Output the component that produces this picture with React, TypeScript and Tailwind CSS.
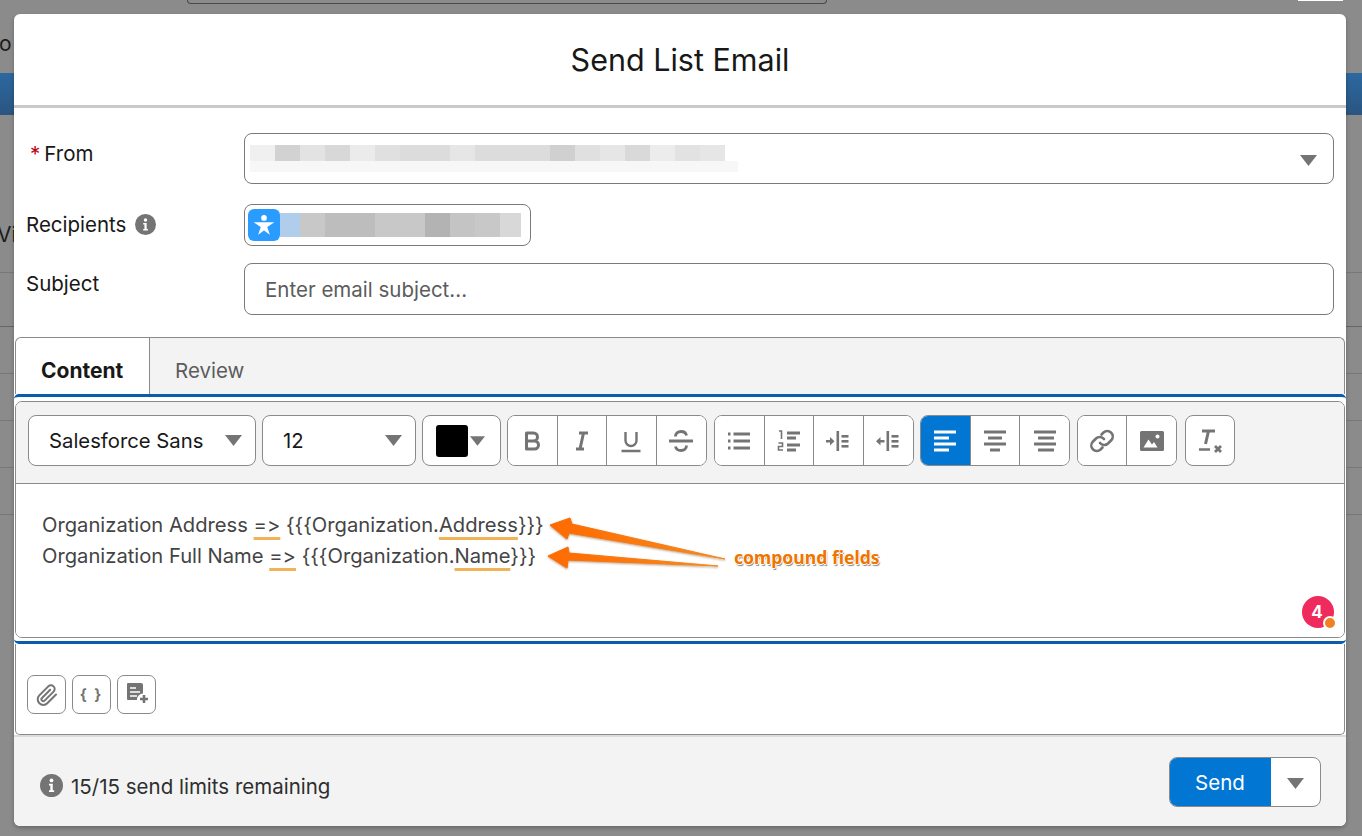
import type { ReactNode } from "react";

const fromRowOne = ["#f0f0f0", "#d2d2d2", "#e3e3e3", "#d8d8d8", "#ebebeb", "#e0e0e0", "#dcdcdc", "#dcdcdc", "#e6e6e6", "#dcdcdc", "#dcdcdc", "#dcdcdc", "#d0d0d0", "#e0e0e0", "#e6e6e6", "#d9d9d9", "#ececec", "#e2e2e2", "#e6e6e6"];
const recipientBlocks = [
  { w: 20, c: "#b0cdec" },
  { w: 25, c: "#c8c8c8" },
  { w: 50, c: "#bdbdbd" },
  { w: 50, c: "#c8c8c8" },
  { w: 25, c: "#b3b3b3" },
  { w: 25, c: "#c4c4c4" },
  { w: 25, c: "#c8c8c8" },
  { w: 21, c: "#d8d8d8" },
];
const markClass = "underline decoration-[#f0b357] decoration-[2.5px] underline-offset-[5px] [text-decoration-skip-ink:none]";

function Caret({ className = "" }: { className?: string }) {
  return (
    <svg width="17" height="11" viewBox="0 0 17 11" className={className}>
      <polygon points="0,0 17,0 8.5,11" fill="#747474" />
    </svg>
  );
}

function Glyph({ children, color = "#747474", width = 2.6 }: { children: ReactNode; color?: string; width?: number }) {
  return (
    <svg width="26" height="26" viewBox="0 0 26 26" fill="none" stroke={color} strokeWidth={width} strokeLinecap="round" strokeLinejoin="round">
      {children}
    </svg>
  );
}

function AlignBars({ rows, color = "#747474" }: { rows: number[][]; color?: string }) {
  return (
    <Glyph color={color} width={2.9}>
      {rows.map(([x1, x2], i) => (
        <path key={i} d={`M${x1} ${4 + i * 6}H${x2}`} strokeLinecap="butt" />
      ))}
    </Glyph>
  );
}

function IndentIcon({ flip }: { flip?: boolean }) {
  return (
    <svg width="26" height="26" viewBox="0 0 26 26">
      <rect x="11.5" y="3" width="2.6" height="20" fill="#747474" />
      {[7, 12, 17].map((y) => (
        <rect key={y} x="16.5" y={y} width="7" height="2.6" fill="#747474" />
      ))}
      {flip ? (
        <path d="M9.500 12h-4v-3l-4.500 4.300 4.500 4.300v-3h4z" fill="#747474" />
      ) : (
        <path d="M1 12h4v-3l4.500 4.300-4.500 4.300v-3h-4z" fill="#747474" />
      )}
    </svg>
  );
}

function ToolButton({ children, active, last, narrow }: { children: ReactNode; active?: boolean; last?: boolean; narrow?: boolean }) {
  return (
    <div className={`flex ${narrow ? "w-[49px]" : "w-[49.5px]"} items-center justify-center ${last ? "" : "border-r border-[#8a8a8a]"} ${active ? "bg-[#0176d3]" : "bg-white"}`}>
      {children}
    </div>
  );
}

function ToolGroup({ children }: { children: ReactNode }) {
  return <div className="flex h-[51px] overflow-hidden rounded-[8px] border border-[#8a8a8a] bg-white">{children}</div>;
}

function InfoDot({ size }: { size: number }) {
  return (
    <svg width={size} height={size} viewBox="0 0 22 22">
      <circle cx="11" cy="11" r="11" fill="#747474" />
      <circle cx="11" cy="6.2" r="1.8" fill="#fff" />
      <path d="M8.6 9.4h3.6v6.2h1.3v1.6H8.6v-1.6h1.3v-4.6H8.6z" fill="#fff" />
    </svg>
  );
}

function SmallAction({ children }: { children: ReactNode }) {
  return <div className="flex h-[39px] w-[39px] items-center justify-center rounded-[7px] border border-[#8a8a8a] bg-white">{children}</div>;
}

function Backdrop() {
  return (
    <div className="flex h-full flex-col bg-[#8b8b8b] text-[21px] text-[#1c1c1c]">
      <div className="flex h-[73px] flex-col">
        <div className="flex">
          <div className="ml-[187px] h-[4px] w-[640px] rounded-b-[4px] border-x border-b border-[#4a4a4a]" />
          <div className="ml-[471px] h-[1px] w-[45px] bg-white" />
        </div>
        <div className="mt-[26px] -ml-[1px] leading-[28px]">o</div>
      </div>
      <div className="h-[42px] bg-linear-to-b from-[#2c68a0] to-[#2a5580]" />
      <div className="h-[158px] border-b border-[#777]">
        <div className="mt-[106px] -ml-[3px] leading-[28px]">Vi</div>
      </div>
      <div className="h-[54px] border-b border-[#666]" />
      <div className="h-[47px] border-b border-[#777]" />
      <div className="h-[47px] border-b border-[#777]" />
      <div className="h-[47px] border-b border-[#777]" />
      <div className="h-[47px] border-b border-[#777]" />
    </div>
  );
}

export default function App() {
  return (
    <div className="relative h-[836px] w-[1362px] overflow-hidden [font-family:Inter,'Liberation_Sans',sans-serif] [font-feature-settings:'calt'_0]">
      <Backdrop />

      <div className="absolute left-[14px] top-[14px] flex h-[812px] w-[1332px] flex-col rounded-[6px] bg-white shadow-[0_2px_4px_rgba(0,0,0,0.25)]">
        <header className="flex h-[94px] items-center justify-center border-b-[3px] border-[#c9c9c9] text-[30.5px] font-normal text-[#181818]">
          Send List Email
        </header>

        <div className="flex flex-col gap-y-[20px] pl-[12px] pr-[12px] pt-[25px] text-[20.5px] text-[#181818]">
          <div className="flex h-[51px]">
            <div className="flex w-[218px] pl-[4px] pt-[7px] leading-[28px]">
              <span className="mr-[4px] text-[#ba0517]">*</span>From
            </div>
            <div className="relative flex flex-1 items-center rounded-[8px] border border-[#7a7a7a] bg-white">
              <div className="absolute left-[5px] top-[11px] flex h-[16px]">
                {fromRowOne.map((c, i) => (
                  <div key={i} className="h-full w-[25px]" style={{ backgroundColor: c }} />
                ))}
              </div>
              <div className="absolute left-[5px] top-[27px] h-[11px] w-[488px] bg-[#f7f7f7]" />
              <Caret className="absolute right-[16px] top-[21px]" />
            </div>
          </div>

          <div className="flex h-[42px]">
            <div className="flex w-[218px] items-start gap-[9px] pt-[7px] leading-[28px]">
              Recipients
              <span className="mt-[3px]">
                <InfoDot size={21} />
              </span>
            </div>
            <div className="flex w-[287px] items-center rounded-[8px] border border-[#7a7a7a] pl-[3px]">
              <div className="flex h-[32px] w-[32px] items-center justify-center rounded-[6px] bg-[#2a9bff]">
                <svg width="24" height="24" viewBox="0 0 22 22">
                  <circle cx="11" cy="4.5" r="2.6" fill="#fff" />
                  <path d="M1.5 8.5 L20.5 8.5 L14 12.8 L16.4 20 L11 16 L5.6 20 L8 12.8 Z" fill="#fff" />
                </svg>
              </div>
              <div className="flex h-[24px]">
                {recipientBlocks.map((b, i) => (
                  <div key={i} className="h-full" style={{ width: b.w, backgroundColor: b.c }} />
                ))}
              </div>
            </div>
          </div>

          <div className="-mt-[3px] flex h-[52px]">
            <div className="w-[218px] pt-[7px] leading-[28px]">Subject</div>
            <div className="flex flex-1 items-center rounded-[8px] border border-[#7a7a7a] pl-[20px] pt-[2px] text-[#5c5c5c]">Enter email subject...</div>
          </div>
        </div>

        <div className="mx-[1px] mt-[22px] flex h-[57px] rounded-t-[6px] border-x border-t border-[#8a8a8a] bg-[#f3f3f3] pt-[11px] text-[20.5px]">
          <div className="-mt-[11px] flex w-[134px] items-center rounded-tl-[6px] border-r border-[#8a8a8a] bg-white pl-[25px] pt-[9px] text-[21px] font-bold text-[#181818]">Content</div>
          <div className="flex items-center pl-[25px] text-[#5c5c5c]">Review</div>
        </div>

        <section className="h-[250px] rounded-[5px] border-y-[3px] border-[#0b5cab] bg-white">
          <div className="mx-[1px] mt-[4px] flex h-[237px] flex-col overflow-hidden rounded-[7px] border border-[#8a8a8a]">
            <div className="flex h-[82px] items-start gap-[6px] border-b border-[#8a8a8a] bg-[#f3f3f3] pl-[12px] pt-[13px]">
              <div className="flex h-[51px] w-[228px] items-center justify-between rounded-[8px] border border-[#8a8a8a] bg-white pl-[20px] pr-[13px] text-[20.3px] text-[#181818]">
                <span className="pt-[1px]">Salesforce Sans</span>
                <Caret />
              </div>
              <div className="flex h-[51px] w-[154px] items-center justify-between rounded-[8px] border border-[#8a8a8a] bg-white pl-[20px] pr-[13px] text-[20.3px] text-[#181818]">
                <span className="pt-[1px]">12</span>
                <Caret />
              </div>
              <div className="flex h-[51px] w-[79px] items-center rounded-[8px] border border-[#8a8a8a] bg-white pl-[13px]">
                <div className="h-[32px] w-[32px] rounded-[3px] bg-black" />
                <Caret className="ml-[2px] h-[10px] w-[15px]" />
              </div>

              <div className="flex gap-[7px]">
                <ToolGroup>
                  <ToolButton>
                    <Glyph width={3}>
                      <path d="M7.5 5h7a4 4 0 0 1 0 8h-7zM7.5 13h8a4 4 0 0 1 0 8h-8z" />
                    </Glyph>
                  </ToolButton>
                  <ToolButton>
                    <Glyph width={3}>
                      <path d="M10 5h9M7 21h8M14.5 5l-3.5 16" strokeLinecap="butt" />
                    </Glyph>
                  </ToolButton>
                  <ToolButton>
                    <Glyph width={2.4}>
                      <path d="M7.5 4v8.5a5.5 5.5 0 0 0 11 0V4" strokeLinecap="butt" />
                      <path d="M3.5 23h19" strokeLinecap="butt" />
                    </Glyph>
                  </ToolButton>
                  <ToolButton last>
                    <Glyph width={2.8}>
                      <path d="M18.5 7.5C18 5 16 3.5 13 3.5c-3.2 0-5.5 2-5.5 5M7.5 18.5c.5 2.5 2.5 4 5.5 4 3.2 0 5.5-2 5.5-5" strokeLinecap="butt" />
                      <path d="M1 13h24" strokeLinecap="butt" />
                    </Glyph>
                  </ToolButton>
                </ToolGroup>

                <ToolGroup>
                  <ToolButton>
                    <Glyph width={3}>
                      <path d="M7.5 6H24M7.5 13H24M7.5 20H24" strokeLinecap="butt" />
                      <path d="M2 6h2.5M2 13h2.5M2 20h2.5" strokeLinecap="butt" />
                    </Glyph>
                  </ToolButton>
                  <ToolButton>
                    <svg width="26" height="26" viewBox="0 0 26 26" fill="none" stroke="#747474">
                      <path d="M11 5h13M11 10h9M11 17h13M11 22h9" strokeWidth="2.9" />
                      <path d="M3 3h2.5v8M2.5 15h4v3.5h-4V22h4.500" strokeWidth="1.600" />
                    </svg>
                  </ToolButton>
                  <ToolButton>
                    <IndentIcon />
                  </ToolButton>
                  <ToolButton last>
                    <IndentIcon flip />
                  </ToolButton>
                </ToolGroup>

                <div className="-ml-[1px] flex h-[51px] overflow-hidden rounded-[8px] border border-[#8a8a8a] bg-white">
                  <ToolButton active>
                    <AlignBars color="#ffffff" rows={[[2, 24], [2, 17], [2, 24], [2, 17]]} />
                  </ToolButton>
                  <ToolButton>
                    <AlignBars rows={[[2, 24], [6, 20], [2, 24], [8, 18]]} />
                  </ToolButton>
                  <ToolButton narrow last>
                    <AlignBars rows={[[2, 24], [6, 22], [2, 24], [6, 22]]} />
                  </ToolButton>
                </div>

                <ToolGroup>
                  <ToolButton narrow>
                    <Glyph width={2.6}>
                      <path d="M11 15a5.5 5.5 0 0 0 8 .5l3.500-3.500a5.500 5.500 0 0 0-8-7.500l-2 2" />
                      <path d="M15 11a5.500 5.500 0 0 0-8-.5l-3.500 3.500a5.500 5.500 0 0 0 8 7.500l2-2" />
                    </Glyph>
                  </ToolButton>
                  <ToolButton narrow last>
                    <svg width="26" height="26" viewBox="0 0 26 26">
                      <rect x="1" y="3" width="24" height="20" rx="1.500" fill="#747474" />
                      <circle cx="18.500" cy="8.500" r="2" fill="#fff" />
                      <path d="M4.500 19.500l5-8 3.500 5 2-2.500 3.500 5.500z" fill="#fff" />
                    </svg>
                  </ToolButton>
                </ToolGroup>

                <div className="ml-[1px] flex h-[51px] w-[50px] items-center justify-center rounded-[8px] border border-[#8a8a8a] bg-white">
                  <svg width="28" height="28" viewBox="0 0 28 28" fill="none" stroke="#747474">
                    <path d="M6 4h13M12.500 4l-3 13" strokeWidth="3" />
                    <path d="M3 22.500h11" strokeWidth="2.600" />
                    <path d="M19 19l6 6M25 19l-6 6" strokeWidth="2.800" />
                  </svg>
                </div>
              </div>
            </div>

            <div className="relative flex-1 bg-white pl-[26px] pt-[25px] text-[20.2px] leading-[31px] text-[#444]">
              <div>
                Organization Address <span className={markClass}>=&gt;</span> {"{{{Organization."}
                <span className={markClass}>Address</span>
                {"}}}"}
              </div>
              <div>
                Organization Full Name <span className={markClass}>=&gt;</span> {"{{{Organization."}
                <span className={markClass}>Name</span>
                {"}}}"}
              </div>
              <div className="absolute bottom-[9px] right-[10px] flex h-[32px] w-[32px] items-center justify-center rounded-full bg-[#ef2a5c] pr-[2px] text-[17px] font-bold text-white">
                4
                <div className="absolute -bottom-[2px] -right-[3px] h-[14px] w-[14px] rounded-full border-2 border-white bg-[#f08020]" />
              </div>
            </div>
          </div>
        </section>

        <div className="mx-[1px] flex h-[91px] gap-[6px] rounded-b-[5px] border-x border-b border-[#8a8a8a] bg-white pl-[11px] pt-[31px]">
          <SmallAction>
            <svg width="24" height="24" viewBox="0 0 24 24" fill="none" stroke="#747474" strokeWidth="2" strokeLinecap="round" strokeLinejoin="round">
              <path d="M21 11.500l-8.700 8.700a5.500 5.500 0 0 1-8-7.800l9-9a3.700 3.700 0 0 1 5.300 5.200l-9 9a1.800 1.800 0 0 1-2.600-2.600l8.200-8.300" />
            </svg>
          </SmallAction>
          <SmallAction>
            <span className="text-[15px] font-bold leading-none tracking-[2px] text-[#747474]">{"{ }"}</span>
          </SmallAction>
          <SmallAction>
            <svg width="28" height="28" viewBox="0 0 28 28" className="mb-[2px] ml-[2px]">
              <path d="M4 3h13a2 2 0 0 1 2 2v8.500a6 6 0 0 0-6 6.500H4a1 1 0 0 1-1-1V4a1 1 0 0 1 1-1z" fill="#747474" />
              <path d="M6 8h6M6 12h10M6 16h7" stroke="#fff" strokeWidth="1.600" />
              <path d="M20 15v8M16 19h8" stroke="#747474" strokeWidth="2.600" />
            </svg>
          </SmallAction>
        </div>

        <footer className="flex flex-1 items-start justify-between rounded-b-[6px] border-t-2 border-[#dcdcdc] bg-[#f3f3f3] pl-[26px] pr-[25px] pt-[20px] text-[20.5px] text-[#2e2e2e]">
          <div className="mt-[16px] flex items-center gap-[8px] leading-[28px]">
            <span className="-mt-[4px]">
              <InfoDot size={23} />
            </span>
            15/15 send limits remaining
          </div>
          <div className="flex h-[50px] w-[152px] overflow-hidden rounded-[8px] border border-[#8a8a8a] bg-white">
            <div className="-my-px -ml-px flex w-[102px] items-center justify-center bg-[#0176d3] pt-[2px] text-white">Send</div>
            <div className="flex flex-1 items-center justify-center pt-[2px]">
              <Caret />
            </div>
          </div>
        </footer>
      </div>

      {/* annotation drawn on top of the screenshot */}
      <svg className="absolute left-[540px] top-[510px] drop-shadow-[0_1px_1px_rgba(120,60,0,0.5)]" width="200" height="70" viewBox="0 0 200 70">
        <defs>
          <linearGradient id="arrow" x1="0" x2="1" y1="0" y2="0">
            <stop offset="0" stopColor="#ff6a00" />
            <stop offset="1" stopColor="#f58a1f" />
          </linearGradient>
        </defs>
        <path d="M10 15 L30 8 L32 14 L185 49 L29 23 L27 29 Z" fill="url(#arrow)" stroke="url(#arrow)" strokeWidth="1" strokeLinejoin="round" />
        <path d="M8 46 L28 37 L29 43 L178 56 L28 50 L27 58 Z" fill="url(#arrow)" stroke="url(#arrow)" strokeWidth="1" strokeLinejoin="round" />
      </svg>
      <div className="absolute left-[734px] top-[545px] text-[17.6px] font-bold leading-[24px] text-[#f07400] [font-family:'Noto_Sans',sans-serif] [text-shadow:1px_0_0_#fff,-1px_0_0_#fff,0_-1px_0_#fff,0_1px_0_#fff,1px_2px_1px_#888]">
        compound fields
      </div>
    </div>
  );
}
